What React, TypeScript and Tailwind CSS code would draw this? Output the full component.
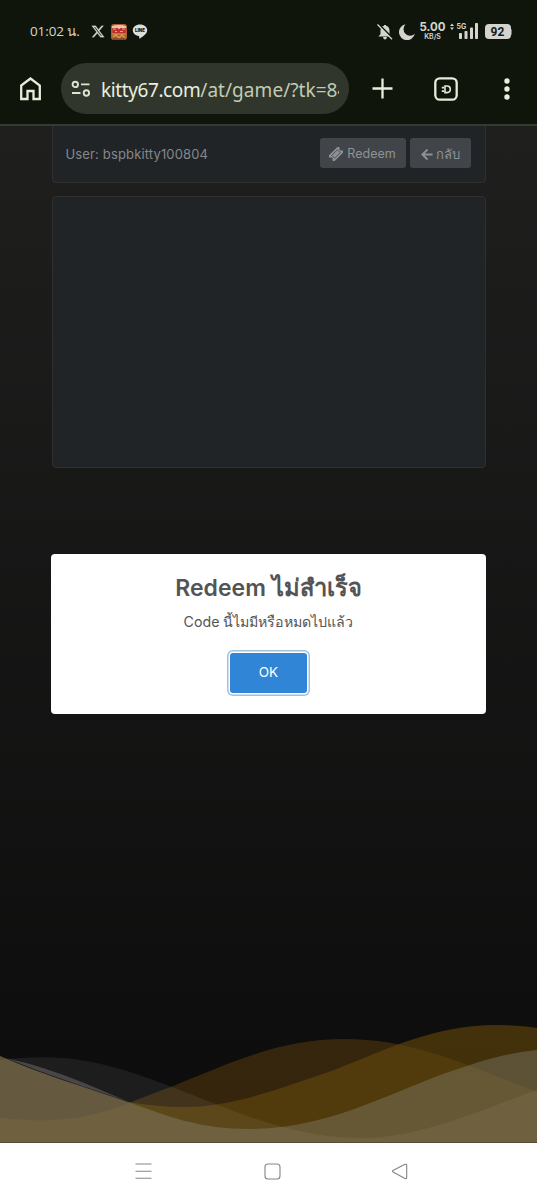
import React from "react";
import { FaXTwitter } from "react-icons/fa6";
import { FaArrowLeft } from "react-icons/fa";

function StatusBar() {
  return (
    <div className="flex h-[62px] items-center pl-[30px] pr-[25px] pt-px text-[#d3d5cf]">
      <span className="w-[61px] whitespace-nowrap pt-px font-['Open_Sans','Noto_Sans',sans-serif] text-[13.5px] leading-none tracking-[-0.1px]">01:02 น.</span>
      <FaXTwitter className="h-[15px] w-[14px]" stroke="currentColor" strokeWidth="8" />
      <svg className="ml-[6px] h-4 w-4" viewBox="0 0 16 16">
        <rect width="16" height="16" rx="3" fill="#a96035" />
        <path d="M1 2Q8 0 15 2V4H1Z" fill="#e9c7a4" />
        <path d="M1.5 4H14.5V9.5H1.5Z" fill="#c12d31" />
        <path d="M2 5H5M7 4.5H9M11 5H14M4 7.5H6M9 7.5H12" stroke="#f0c7ad" strokeWidth=".8" />
        <path d="M1 10H15M2 13L5 11L8 14L11 11L14 14" fill="none" stroke="#d7a24c" strokeWidth="1.2" />
        <path d="M2 15H14" stroke="#71291c" />
      </svg>
      <svg className="ml-[5px] h-[15px] w-4" viewBox="0 0 16 15">
        <path d="M8 .5C3.8.5.8 3 .8 6.3c0 3 2.4 5.2 5.8 5.7l.6.3V14c0 .5.5.7.9.4 3.2-2 7.1-4.7 7.1-8.1C15.2 3 12.2.5 8 .5Z" fill="#dedfdd" />
        <text x="8" y="8" textAnchor="middle" fontFamily="Inter, sans-serif" fontSize="4.4" fontWeight="900" fill="#13150f">LINE</text>
      </svg>
      <div className="ml-auto flex items-center">
        <svg className="h-4 w-4" viewBox="0 0 16 16">
          <path d="M1.5 12.5H14.5L12.5 10V6.5C12.5 4 11 2.3 9 1.8V1H7v.8C5 2.3 3.5 4 3.5 6.5V10ZM6 13H10Q9.5 15.5 8 15.5T6 13" fill="#d3d4d0" />
          <path d="M2 .5L16 14.5" stroke="#10150b" strokeWidth="1.8" />
          <path d="M.5 .5L15 15.3" stroke="#d3d4d0" strokeWidth="1.3" />
        </svg>
        <svg className="ml-[6px] h-4 w-4" viewBox="0 0 16 16"><path d="M6.5 .3A8 8 0 1 0 15.8 9.8A6 6 0 0 1 6.5 .3Z" fill="#d3d4d0" /></svg>
        <div className="ml-[5px] flex w-[26px] flex-col items-center font-['Inter',sans-serif] font-bold">
          <span className="text-[11.5px] leading-[9px]">5.00</span>
          <span className="mt-px text-[7px] font-semibold leading-[7px]">KB/S</span>
        </div>
        <svg className="ml-[4px] h-[17px] w-[29px]" viewBox="0 0 29 17" fill="#d3d4d0">
          <path d="M0 3L2 .5L4 3ZM0 4.5L2 7L4 4.5Z" />
          <text x="6.5" y="6.4" fontFamily="Inter, sans-serif" fontSize="7" fontWeight="700">5G</text>
          <rect x="9" y="10" width="3" height="6" rx=".8" /><rect x="14.5" y="8" width="3" height="8" rx=".8" /><rect x="20" y="4.5" width="3" height="11.5" rx=".8" /><rect x="25" y="0" width="3" height="16" rx=".8" />
        </svg>
        <div className="ml-[6px] flex h-[15px] w-[26px] items-center justify-center rounded-[4px] bg-[#d3d4d0] font-['Roboto',sans-serif] text-[12px] font-bold text-[#151a10]">92</div>
        <div className="h-[6px] w-[1.5px] rounded-r bg-[#777a73]" />
      </div>
    </div>
  );
}

function BrowserBar() {
  return (
    <div className="flex h-[62px] items-start pl-5 pt-px">
      <svg className="mt-[14px] h-6 w-[21px]" viewBox="0 0 21 24"><path d="M1.2 8.5L10.5 1.5L19.8 8.5V22H13.5V14H7.5V22H1.2Z" fill="none" stroke="#e5ecda" strokeWidth="2.3" /></svg>
      <div className="ml-[20px] flex h-[51px] w-[288px] items-center rounded-full bg-[#31362c] pl-[10px] pr-[10px]">
        <svg className="mr-[10px] h-5 w-5 shrink-0" viewBox="0 0 20 20" fill="none" stroke="#dce5cf" strokeWidth="1.9"><circle cx="4.3" cy="5.4" r="2.7" /><path d="M10 5.4H18.5M1 14H9.5" /><circle cx="15.4" cy="14" r="2.7" /></svg>
        <div className="h-9 min-w-0 flex-1 overflow-hidden whitespace-nowrap font-['Noto_Sans',sans-serif] text-[19px] leading-[38px] tracking-[0.05px] text-[#c2cbb3]"><span className="tracking-[-0.4px] text-[#e8eedf]">kitty67.com</span>/at/game/?tk=84</div>
      </div>
      <svg className="ml-[23px] mt-[15px] h-[21px] w-[21px]" viewBox="0 0 21 21"><path d="M10.5 .5V20.5M.5 10.5H20.5" stroke="#e7efdc" strokeWidth="2.3" /></svg>
      <svg className="ml-[41px] mt-[14px] h-6 w-6" viewBox="0 0 24 24" fill="none" stroke="#e5ecda"><rect x="1.3" y="1.3" width="21.4" height="21.4" rx="4.5" strokeWidth="2.3" /><path d="M11 9H13A3.3 3.3 0 0 1 13 15.6H11Z" strokeWidth="1.6" /><path d="M7.8 10.6H10M7.8 14.1H10" strokeWidth="1.7" /></svg>
      <svg className="ml-[46px] mt-[15px] h-[22px] w-[6px]" viewBox="0 0 6 22" fill="#e7efdc"><circle cx="3" cy="3" r="2.7" /><circle cx="3" cy="11" r="2.7" /><circle cx="3" cy="19" r="2.7" /></svg>
    </div>
  );
}

function Waves() {
  return (
    <svg className="block h-[123px] w-full shrink-0" viewBox="0 1020 537 123" preserveAspectRatio="none">
      <path d="M0 1118C60 1125 100 1116 135 1100.5C147 1096 159 1091 172 1086.5C235 1061 280 1039 345 1039C415 1039 470 1067 537 1092V1143H0Z" fill="#ffa50d" fillOpacity=".165" />
      <path d="M0 1056C40 1074 85 1087 128 1102Q157 1107 185 1107C235 1107 283 1087 334 1070C390 1048 435 1025 497 1025Q520 1025 537 1028V1143H0Z" fill="#64470b" fillOpacity=".62" />
      <path d="M0 1060C65 1052 105 1061 172 1087C230 1109 290 1138 360 1138C420 1138 475 1112 537 1090V1143H0Z" fill="#fff" fillOpacity=".065" />
      <path d="M0 1056C40 1074 85 1087 128 1102C170 1117 200 1129 250 1129C335 1129 400 1086 467 1066Q505 1053 537 1050V1143H0Z" fill="#9d9f98" fillOpacity=".3" />
      <path d="M6 1058Q42 1066 83 1082.5L128 1101.5C88 1088 42 1073 6 1058Z" fill="#4a4648" />
      <path d="M0 1142.5H537" stroke="#564b36" />
    </svg>
  );
}

function GamePage() {
  return (
    <main className="relative flex h-[1017px] flex-col bg-linear-to-b from-[#1f1f1e] to-[#0c0c0c]">
      <div className="mx-auto flex h-[57px] w-[434px] items-center justify-between rounded-b-[4px] border border-t-0 border-[#302f2d] bg-[#202427] pl-[13px] pr-[14px] font-['Inter',sans-serif] text-[13px] text-[#85888a]">
        <span className="pt-px tracking-[0.15px]">User: bspbkitty100804</span>
        <div className="mb-[2px] flex gap-1">
          <button className="flex h-[30px] w-[86px] items-center justify-center gap-1 rounded-[3px] bg-[#414549] text-[#8e9296]">
            <svg className="mt-px h-[14px] w-[14px]" viewBox="0 0 14 14"><g transform="rotate(-45 7 7)"><path d="M0 3H14V5.5A1.5 1.5 0 0 0 14 8.5V11H0V8.5A1.5 1.5 0 0 0 0 5.5Z" fill="currentColor" /><path d="M3 5H11V9H3Z" fill="none" stroke="#414549" strokeWidth=".8" /></g></svg>
            <span className="pt-[3px] text-[12.5px]">Redeem</span>
          </button>
          <button className="flex h-[30px] w-[61px] items-center justify-center gap-[3px] rounded-[3px] bg-[#414549] text-[#8e9296]"><FaArrowLeft className="mt-[2px] h-[13px] w-[12px]" /><span className="pt-[3px]">กลับ</span></button>
        </div>
      </div>
      <div className="mx-auto mt-[13px] h-[272px] w-[434px] rounded-[4px] border border-[#302f2d] bg-[#202427]" />
      <div className="flex-1" />
      <Waves />
      <section role="dialog" className="absolute left-[51px] top-[428px] flex h-[160px] w-[435px] flex-col items-center rounded-[4px] bg-white pt-[15px] font-['Inter',sans-serif] text-[#545454]">
        <h2 className="h-9 whitespace-nowrap text-[23px] font-semibold leading-[37px]">Redeem <span className="text-[23.7px]">ไม่สำเร็จ</span></h2>
        <p className="mt-[5px] h-6 whitespace-nowrap text-[14.2px] leading-6">Code นี้ไมมีหรือหมดไปแล้ว</p>
        <button className="mt-[19px] h-[40px] w-[77px] rounded-[3px] bg-[#3085d6] pb-[2px] text-[13.5px] text-white shadow-[0_0_0_1.5px_#fff,0_0_0_3px_#a0c0dc]">OK</button>
      </section>
    </main>
  );
}

export default function App() {
  return (
    <div className="flex h-[1199px] w-[537px] flex-col overflow-hidden bg-white">
      <header className="h-[126px] shrink-0 border-b-2 border-[#343b31] bg-[#10150b]">
        <StatusBar />
        <BrowserBar />
      </header>
      <GamePage />
      <nav className="flex h-14 shrink-0 items-center pl-[135px]">
        <svg className="h-[17px] w-[17px]" viewBox="0 0 17 17"><path d="M.5 1H16.5M.5 8.2H16.5M.5 15.3H16.5" stroke="#858585" strokeWidth="1.1" /></svg>
        <svg className="ml-[112px] h-[17px] w-[17px]" viewBox="0 0 17 17"><rect x="1" y="1" width="15" height="15" rx="3" fill="none" stroke="#858585" strokeWidth="1.1" /></svg>
        <svg className="ml-[110px] h-[17px] w-[17px]" viewBox="0 0 17 17"><path d="M14 1.3L2 7.5Q1 8.3 2 9L14 15.5Q15.7 16 15.7 14.5V2.3Q15.7.8 14 1.3Z" fill="none" stroke="#858585" strokeWidth="1.1" /></svg>
      </nav>
    </div>
  );
}
